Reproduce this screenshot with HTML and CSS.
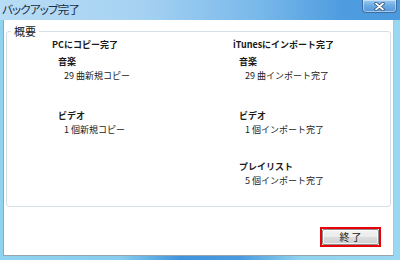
FILE: index.html
```html
<!DOCTYPE html>
<html lang="ja">

<head>
    <meta charset="UTF-8">
    <title>バックアップ完了</title>
    <link rel="stylesheet" href="styles.css">
</head>

<body>
    <div class="window">
        <div class="titlebar">
            <span class="title">バックアップ完了</span>
            <button class="close-btn" aria-label="閉じる">
                <svg width="13" height="9" viewBox="0 0 13 9">
                    <path d="M3 1.5 L10 7.5 M10 1.5 L3 7.5" stroke="#2f4e6e" stroke-width="3.4" stroke-linecap="round" />
                    <path d="M3 1.5 L10 7.5 M10 1.5 L3 7.5" stroke="#fff" stroke-width="1.8" stroke-linecap="round" />
                </svg>
            </button>
        </div>

        <div class="client">
            <fieldset class="group">
                <legend>概要</legend>
                <div class="columns">
                    <div class="column">
                        <div class="col-title">PCにコピー完了</div>
                        <div class="section section-music">
                            <div class="section-title">音楽</div>
                            <div class="section-item">29 曲新規コピー</div>
                        </div>
                        <div class="section section-video">
                            <div class="section-title">ビデオ</div>
                            <div class="section-item">1 個新規コピー</div>
                        </div>
                    </div>
                    <div class="column">
                        <div class="col-title">iTunesにインポート完了</div>
                        <div class="section section-music">
                            <div class="section-title">音楽</div>
                            <div class="section-item">29 曲インポート完了</div>
                        </div>
                        <div class="section section-video">
                            <div class="section-title">ビデオ</div>
                            <div class="section-item">1 個インポート完了</div>
                        </div>
                        <div class="section section-playlist">
                            <div class="section-title">プレイリスト</div>
                            <div class="section-item">5 個インポート完了</div>
                        </div>
                    </div>
                </div>
            </fieldset>

            <div class="footer">
                <div class="highlight">
                    <button class="btn">終 了</button>
                </div>
            </div>
        </div>
    </div>
</body>

</html>
```

FILE: styles.css
```css
body {
    margin: 0;
    font-family: "Noto Sans CJK JP", "Noto Sans", sans-serif;
    font-size: 9px;
    color: #1a1a1a;
}

.window {
    width: 400px;
    height: 260px;
    display: flex;
    flex-direction: column;
    background: linear-gradient(to right, #8fd3ef 0%, #86cdef 30%, #3f94dc 45%, #4a9be0 60%, #8fd3ef 75%, #9ad8f2 100%);
}

.titlebar {
    height: 20px;
    display: flex;
    justify-content: space-between;
    align-items: flex-start;
    background: linear-gradient(to right, #b8dcf5 0%, #a6d2f2 35%, #78b8ea 65%, #4f9de0 85%, #4b99de 100%);
}

.title {
    padding: 1px 0 0 2px;
    font-size: 11.5px;
    line-height: 16px;
    letter-spacing: -0.8px;
    color: #1c2f44;
    font-feature-settings: "palt";
}

.close-btn {
    width: 35px;
    height: 13px;
    margin-right: 3px;
    padding: 0;
    border: 1px solid #3f6f9f;
    border-top: none;
    border-radius: 0 0 4px 4px;
    background: linear-gradient(to bottom, #9ccaf0 0%, #6aa9e3 50%, #5597dc 100%);
    box-shadow: inset 0 0 0 1px rgba(255, 255, 255, 0.45);
    display: flex;
    align-items: center;
    justify-content: center;
}

.client {
    flex: 1;
    margin: 0 6px 4px 3px;
    background: #fff;
    border-left: 1px solid #9aa4ad;
    border-bottom: 1px solid #9aa4ad;
    border-right: 1px solid #b6c4cf;
    display: flex;
    flex-direction: column;
}

.group {
    margin: 4px 2px 0 2px;
    padding: 0;
    height: 183px;
    box-sizing: border-box;
    border: 1px solid #d5dfe5;
    border-radius: 3px;
    box-shadow: inset 1px 1px 0 #fff;
}

.group legend {
    margin-left: 4px;
    padding: 0 3px;
    font-size: 11px;
    line-height: 14px;
}

.columns {
    display: grid;
    grid-template-columns: 181px 1fr;
    padding: 0 0 0 45px;
}

.col-title {
    font-weight: bold;
    line-height: 14px;
}

.section-title {
    font-weight: bold;
    line-height: 14px;
    padding-left: 6px;
}

.section-item {
    line-height: 14px;
    padding-left: 12px;
}

.section-music {
    margin-top: 3px;
}

.section-video {
    margin-top: 26px;
}

.section-playlist {
    margin-top: 23px;
}

.footer {
    flex: 1;
    display: flex;
    justify-content: flex-end;
    align-items: flex-end;
    padding: 0 12px 8px 0;
}

.highlight {
    border: 2px solid #e8000b;
    display: flex;
}

.btn {
    width: 57px;
    height: 16px;
    padding: 0;
    font-family: "Noto Sans CJK JP", sans-serif;
    font-size: 10px;
    line-height: 14px;
    color: #1a1a1a;
    border: 1px solid #8e8f8f;
    border-radius: 2px;
    background: linear-gradient(to bottom, #f2f2f2 0%, #ebebeb 50%, #dddddd 51%, #cfcfcf 100%);
    box-shadow: inset 0 0 0 1px rgba(255, 255, 255, 0.7);
}
```
